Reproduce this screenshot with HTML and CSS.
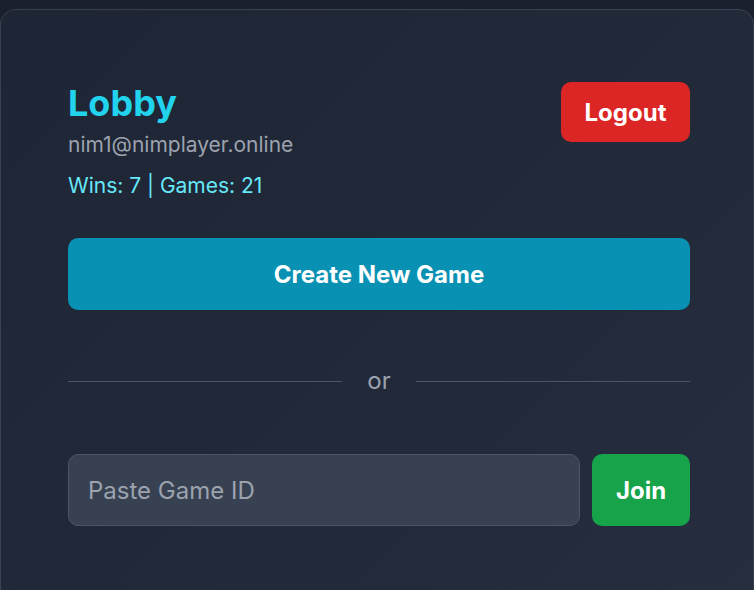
FILE: index.html
```html
<!DOCTYPE html>
<html>
<head>
  <title>Nim Lobby</title>
  <link rel="stylesheet" href="styles.css">
</head>
<body>
  <div id="lobby">
    <div id="cabecalho">
      <div id="usuario">
        <h1>Lobby</h1>
        <div id="email">nim1@nimplayer.online</div>
        <div id="placar">Wins: 7 | Games: 21</div>
      </div>
      <button id="btn-logout" class="btn">Logout</button>
    </div>

    <button id="btn-criar" class="btn">Create New Game</button>

    <div id="divisor">
      <span class="linha"></span>
      <span class="ou">or</span>
      <span class="linha"></span>
    </div>

    <div id="entrar">
      <input id="game-id" type="text" placeholder="Paste Game ID">
      <button id="btn-join" class="btn">Join</button>
    </div>
  </div>
</body>
</html>
```

FILE: styles.css
```css
body {
  font-family: 'Inter', 'Noto Sans', sans-serif;
  background: #1a202e;
  margin: 0;
  padding: 9px 0 0;
  height: 100vh;
  box-sizing: border-box;
  overflow: hidden;
}
#lobby {
  background: linear-gradient(135deg, #1e2534, #252d3e);
  border: 1px solid rgba(255, 255, 255, 0.1);
  border-bottom: none;
  border-radius: 16px 16px 0 0;
  padding: 72px 63px 0 67px;
  height: 100%;
  box-sizing: border-box;
}
#cabecalho {
  display: flex;
  justify-content: space-between;
  align-items: flex-start;
}
h1 {
  color: #22d3ee;
  font-size: 36px;
  line-height: 43px;
  font-weight: 700;
  margin: 0;
}
#email {
  color: #9ca3af;
  font-size: 21px;
  line-height: 33px;
  margin-top: 3px;
}
#placar {
  color: #67e8f9;
  font-size: 21px;
  line-height: 33px;
  margin-top: 8px;
}
.btn {
  font-family: inherit;
  color: white;
  border: none;
  border-radius: 10px;
  font-size: 24px;
  font-weight: 700;
  cursor: pointer;
}
#btn-logout {
  background: #dc2626;
  width: 129px;
  height: 60px;
}
#btn-criar {
  display: block;
  width: 100%;
  height: 72px;
  margin-top: 36px;
  background: #0891b2;
}
#divisor {
  display: flex;
  align-items: center;
  gap: 25px;
  margin: 55px 0 57px;
}
.linha {
  flex: 1;
  height: 1px;
  background: #4b5563;
}
.ou {
  color: #9ca3af;
  font-size: 24px;
  line-height: 32px;
}
#entrar {
  display: flex;
  gap: 12px;
}
#game-id {
  flex: 1;
  height: 72px;
  box-sizing: border-box;
  background: #374151;
  border: 1px solid #4b5563;
  border-radius: 10px;
  padding: 0 19px;
  font-family: inherit;
  font-size: 24px;
  color: white;
}
#game-id::placeholder {
  color: #9ca3af;
}
#btn-join {
  background: #16a34a;
  width: 98px;
  height: 72px;
}
```
